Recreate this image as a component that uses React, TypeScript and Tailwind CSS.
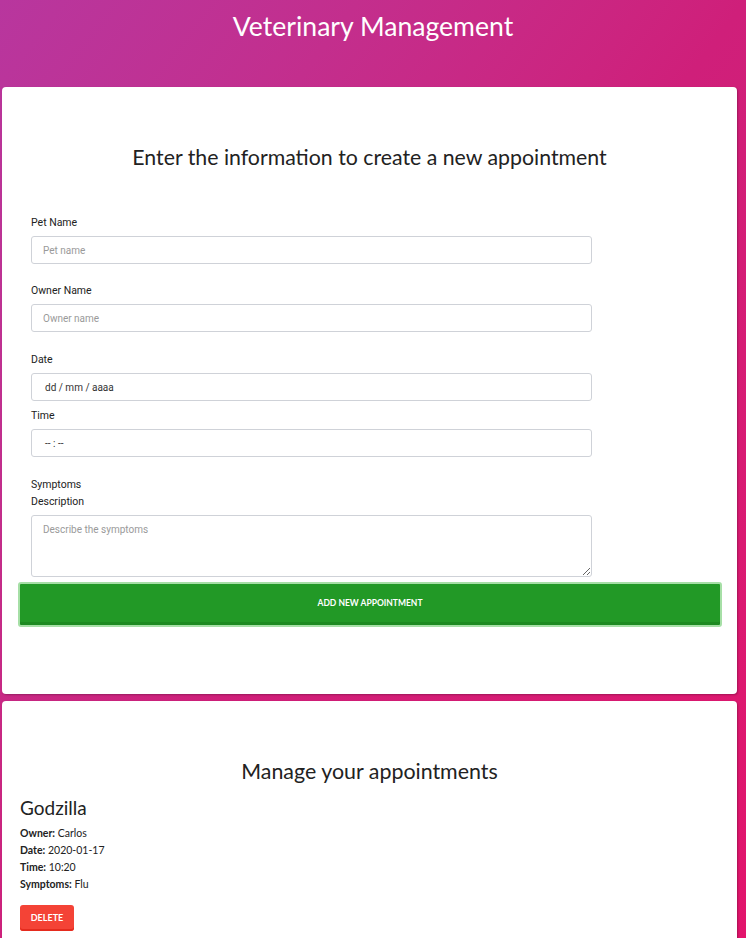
const head = { fontFamily: "Lato, 'Noto Sans', sans-serif" };
const ui = { fontFamily: "Roboto, 'Noto Sans', sans-serif" };

function Label({ children, className = "" }: { children: React.ReactNode; className?: string }) {
  return (
    <div className={`text-[10.5px] leading-[14px] text-[#222] ${className}`} style={ui}>
      {children}
    </div>
  );
}

const inputCls =
  "block w-[561px] h-[28px] rounded-[3px] border border-[#cfd2d8] bg-white px-[11px] text-[10px] text-[#333] placeholder:text-[#9a9a9a] outline-none";

export default function App() {
  return (
    <div className="min-h-[950px] bg-linear-to-br from-[#b8369e] via-[#cf1f7a] to-[#e3136b] pb-4">
      <header className="h-[87px] pt-[8px] text-center">
        <h1 className="text-[26.6px] leading-[36px] text-white" style={head}>
          Veterinary Management
        </h1>
      </header>

      <section className="mx-[2px] w-[735px] rounded-[4px] bg-white px-[16px] pt-[56px] pb-[67px] shadow-[1px_1px_2px_rgba(0,0,0,0.25)]">
        <h2 className="text-center text-[21.3px] leading-[28px] text-[#222]" style={head}>
          Enter the information to create a new appointment
        </h2>

        <form className="pl-[13px]" onSubmit={(e) => e.preventDefault()}>
          <Label className="mt-[45px]">Pet Name</Label>
          <input className={`${inputCls} mt-[6px]`} style={ui} placeholder="Pet name" />

          <Label className="mt-[20px]">Owner Name</Label>
          <input className={`${inputCls} mt-[6px]`} style={ui} placeholder="Owner name" />

          <Label className="mt-[21px]">Date</Label>
          <div className={`${inputCls} mt-[6px] flex items-center pl-[13px]`} style={ui}>
            dd / mm / aaaa
          </div>

          <Label className="mt-[8px]">Time</Label>
          <div className={`${inputCls} mt-[6px] flex items-center pl-[13px]`} style={ui}>
            -- : --
          </div>

          <Label className="mt-[19px] leading-[17px]">Symptoms</Label>
          <Label className="leading-[17px]">Description</Label>
          <textarea
            className="mt-[5px] block h-[62px] w-[561px] rounded-[3px] border border-[#cfd2d8] px-[11px] pt-[6px] text-[10px] text-[#333] placeholder:text-[#9a9a9a] outline-none"
            style={ui}
            placeholder="Describe the symptoms"
          />
        </form>

        <button
          className="mt-[5px] block h-[45px] w-[704px] rounded-[3px] border-2 border-[#a6dfa6] bg-[#229926] pb-[3px] text-[8.5px] font-bold uppercase text-white shadow-[inset_0_-3px_0_#1d8a21]"
          style={head}
        >
          Add new appointment
        </button>
      </section>

      <section className="mx-[2px] mt-[7px] w-[735px] rounded-[4px] bg-white px-[16px] pt-[56px] pb-[40px] shadow-[1px_1px_2px_rgba(0,0,0,0.25)]">
        <h2 className="text-center text-[21.4px] leading-[28px] text-[#222]" style={head}>
          Manage your appointments
        </h2>
        <div className="pl-[2px]">
          <h3 className="mt-[11px] text-[19px] leading-[24px] text-[#222]" style={head}>
            Godzilla
          </h3>
          <div className="mt-[5px] text-[10.5px] leading-[17px] text-[#222]" style={head}>
            <p>
              <strong>Owner:</strong> Carlos
            </p>
            <p>
              <strong>Date:</strong> 2020-01-17
            </p>
            <p>
              <strong>Time:</strong> 10:20
            </p>
            <p>
              <strong>Symptoms:</strong> Flu
            </p>
          </div>
          <button
            className="mt-[12px] block h-[26px] w-[54px] rounded-[3px] bg-[#f44336] text-[9px] font-bold uppercase text-white shadow-[inset_0_-2px_0_#e52b1e]"
            style={head}
          >
            Delete
          </button>
        </div>
      </section>
    </div>
  );
}
